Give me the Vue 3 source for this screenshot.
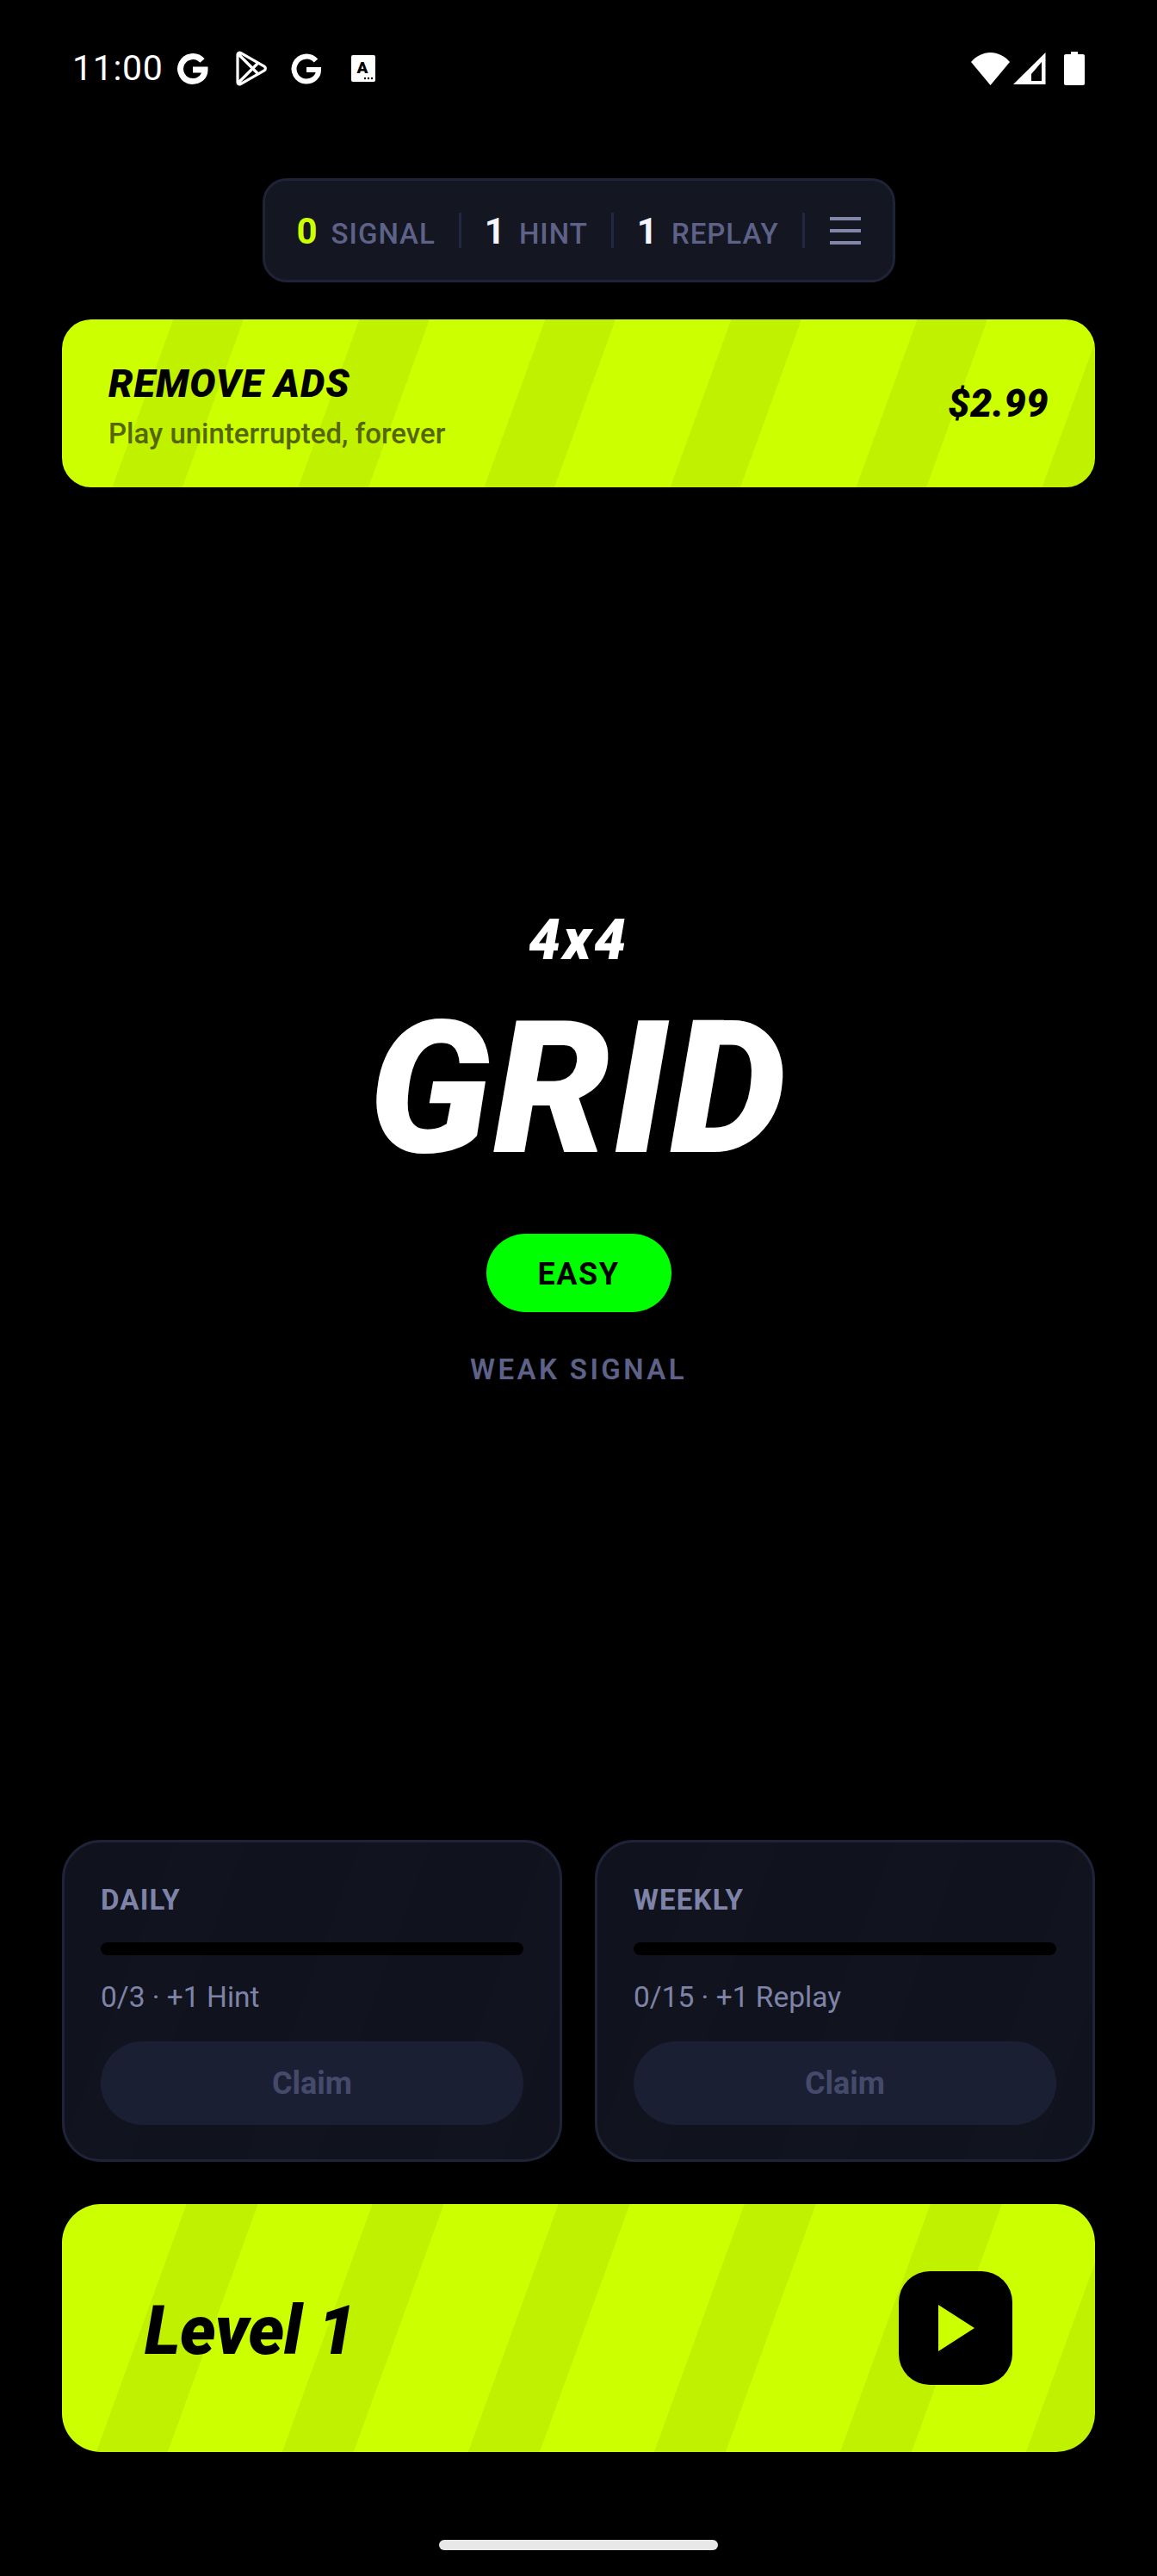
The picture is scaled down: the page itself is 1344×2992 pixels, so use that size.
<script setup>
const stats = [
  { n: '0', label: 'SIGNAL', accent: true },
  { n: '1', label: 'HINT' },
  { n: '1', label: 'REPLAY' }
]
const quests = [
  { title: 'DAILY', progress: '0/3 · +1 Hint' },
  { title: 'WEEKLY', progress: '0/15 · +1 Replay' }
]
</script>

<template>
  <div class="page">
    <header class="status">
      <span class="time">11:00</span>
      <svg class="g g1" viewBox="0 0 38 36"><path d="M31 8.500A14.500 14.500 0 1 0 19 32.500C28 32.500 34 27 34 19H20" fill="none" stroke="#fff" stroke-width="7"/></svg>
      <svg class="play" viewBox="0 0 38 41"><path d="M3 4.500c0-2 2-3 3.500-2.200L34 18.200c1.800 1 1.800 3.600 0 4.600L6.500 38.700C5 39.500 3 38.500 3 36.500ZM3.500 3.500 26 26M3.500 37.500 26 15" fill="none" stroke="#fff" stroke-width="3.200" stroke-linejoin="round"/></svg>
      <svg class="g g2" viewBox="0 0 38 36"><path d="M31 8.500A14.500 14.500 0 1 0 19 32.500C28 32.500 34 27 34 19H20" fill="none" stroke="#fff" stroke-width="6"/></svg>
      <svg class="acard" viewBox="0 0 28 31"><rect width="28" height="31" rx="2" fill="#fff"/><text x="13" y="21" text-anchor="middle" font-family="Roboto" font-weight="900" font-size="19" fill="#000">A</text><circle cx="16" cy="27" r="1.200"/><circle cx="20" cy="27" r="1.200"/><circle cx="24" cy="27" r="1.200"/></svg>
      <span class="spacer"></span>
      <svg class="wifi" viewBox="0 0 45 38"><path d="M22.500 38 0 11C6 4 14 0 22.500 0S39 4 45 11Z" fill="#fff"/></svg>
      <svg class="signal" viewBox="0 0 38 37"><path fill-rule="evenodd" d="M37.500 0V37H0ZM33 11 21 25V33H33Z" fill="#fff"/></svg>
      <svg class="battery" viewBox="0 0 24 39"><path d="M8 0h8v3h6a2 2 0 0 1 2 2v32a2 2 0 0 1-2 2H2a2 2 0 0 1-2-2V5a2 2 0 0 1 2-2h6Z" fill="#fff"/></svg>
    </header>

    <nav class="pill">
      <template v-for="s in stats" :key="s.label">
        <div class="stat">
          <span class="num" :class="{ accent: s.accent }">{{ s.n }}</span>
          <span class="lab">{{ s.label }}</span>
        </div>
        <i class="sep"></i>
      </template>
      <div class="burger"><i></i><i></i><i></i></div>
    </nav>

    <section class="banner">
      <div class="b-text">
        <div class="b-title">REMOVE ADS</div>
        <div class="b-sub">Play uninterrupted, forever</div>
      </div>
      <div class="price">$2.99</div>
    </section>

    <main class="hero">
      <div class="size">4x4</div>
      <h1 class="grid-title">GRID</h1>
      <div class="easy">EASY</div>
      <div class="weak">WEAK SIGNAL</div>
    </main>

    <section class="quests">
      <article v-for="q in quests" :key="q.title" class="quest">
        <div class="q-title">{{ q.title }}</div>
        <div class="track"></div>
        <div class="q-prog">{{ q.progress }}</div>
        <button class="claim">Claim</button>
      </article>
    </section>

    <section class="level">
      <span class="level-name">Level 1</span>
      <span class="go"><svg viewBox="0 0 42 54" class="tri"><path d="M0 0 42 27 0 54Z" fill="#ccff00"/></svg></span>
    </section>

    <div class="home"></div>
  </div>
</template>

<style>
html, body { margin: 0; background: #000; }
</style>

<style scoped>
.page {
  width: 1344px;
  height: 2992px;
  background: #000;
  display: flex;
  flex-direction: column;
  font-family: Roboto, sans-serif;
  color: #fff;
  box-sizing: border-box;
  overflow: hidden;
}
.status {
  height: 41px;
  margin-top: 59px;
  padding: 0 84px 0 84px;
  display: flex;
  align-items: center;
  flex: none;
}
.time { font-size: 41px; font-weight: 400; line-height: 41px; width: 120px; letter-spacing: 0.700px; }
.g { width: 38px; height: 36px; flex: none; }
.play { width: 38px; height: 41px; margin-left: 31px; flex: none; }
.g2 { margin-left: 25px; }
.acard { width: 28px; height: 31px; margin-left: 34px; flex: none; }
.spacer { flex: 1; }
.wifi { width: 45px; height: 38px; flex: none; }
.signal { width: 38px; height: 37px; margin-left: 4px; flex: none; }
.battery { width: 24px; height: 39px; margin-left: 21px; flex: none; }

.pill {
  align-self: center;
  margin-top: 107px;
  width: 735px;
  height: 121px;
  box-sizing: border-box;
  background: #141722;
  border: 3px solid #1f2338;
  border-radius: 28px;
  display: flex;
  align-items: center;
  padding: 3px 0 0 37px;
  flex: none;
}
.stat { display: flex; align-items: baseline; gap: 16px; }
.num { font-size: 42px; font-weight: 700; color: #f4f5ff; line-height: 1; }
.num.accent { color: #ccff00; }
.lab { font-size: 33px; font-weight: 500; letter-spacing: 1px; color: #5e6288; }
.sep { width: 3px; height: 41px; background: #232842; margin: -3px 27px 0 27px; flex: none; }
.burger { display: flex; flex-direction: column; gap: 10px; margin: -3px 0 0 2px; }
.burger i { display: block; width: 36px; height: 4px; background: #8286a8; }

.banner {
  margin: 43px 72px 0;
  height: 195px;
  border-radius: 34px;
  flex: none;
  display: flex;
  align-items: center;
  justify-content: space-between;
  padding: 0 54px;
  color: #000;
  background: repeating-linear-gradient(110deg, #ccff00 0 121.600px, #c0f200 121.600px 198.200px, #ccff00 198.200px 203px);
}
.b-text { padding-top: 6px; }
.b-title { font-size: 45px; font-weight: 900; font-style: italic; line-height: 52px; letter-spacing: 1px; }
.b-sub { font-size: 33px; font-weight: 500; line-height: 40px; margin-top: 12px; color: #556600; }
.price { font-size: 45px; font-weight: 900; font-style: italic; letter-spacing: 0.500px; }

.hero {
  flex: 1;
  display: flex;
  flex-direction: column;
  align-items: center;
  justify-content: flex-start;
  padding-top: 488px;
}
.size { font-size: 66px; font-weight: 900; font-style: italic; line-height: 76px; letter-spacing: 3px; }
.grid-title {
  margin: 27px 0 0;
  font-size: 215px;
  font-weight: 900;
  font-style: italic;
  line-height: 215px;
  letter-spacing: 3px;
}
.easy {
  margin-top: 61px;
  width: 215px;
  height: 91px;
  box-sizing: border-box;
  padding-top: 2px;
  border-radius: 46px;
  background: #00ff00;
  color: #000;
  font-size: 36px;
  font-weight: 700;
  letter-spacing: 1.500px;
  display: flex;
  align-items: center;
  justify-content: center;
}
.weak { margin-top: 47px; font-size: 33px; font-weight: 600; letter-spacing: 3.400px; line-height: 40px; color: #5e6288; }

.quests {
  margin: 0 72px;
  display: grid;
  grid-template-columns: 1fr 1fr;
  gap: 38px;
  flex: none;
}
.quest {
  height: 374px;
  box-sizing: border-box;
  border: 3px solid #1f2338;
  border-radius: 45px;
  padding: 47px 42px 0;
  background: repeating-linear-gradient(110deg, #10131d 0 120px, #11141e 120px 197px, #10131d 197px 203px);
  display: flex;
  flex-direction: column;
}
.q-title { font-size: 33px; font-weight: 700; line-height: 40px; letter-spacing: 1.200px; color: #7f83a8; }
.track { height: 15px; border-radius: 8px; background: #000; margin-top: 29px; }
.q-prog { font-size: 33.500px; font-weight: 400; line-height: 40px; margin-top: 29px; color: #7f83a8; }
.claim {
  margin-top: 31px;
  height: 97px;
  border: 0;
  border-radius: 49px;
  background: #1a1f33;
  color: #454a6b;
  font-family: inherit;
  font-size: 36px;
  font-weight: 700;
}

.level {
  margin: 49px 72px 0;
  height: 288px;
  border-radius: 45px;
  flex: none;
  display: flex;
  align-items: center;
  justify-content: space-between;
  padding: 0 96px;
  color: #000;
  background: repeating-linear-gradient(110deg, #c0f200 0 10.900px, #ccff00 10.900px 135.900px, #c0f200 135.900px 203px);
}
.level-name { font-size: 79px; font-weight: 900; font-style: italic; padding-top: 5px; letter-spacing: -0.500px; }
.go {
  width: 132px;
  height: 132px;
  border-radius: 36px;
  background: #000;
  display: flex;
  align-items: center;
  justify-content: center;
}
.tri { width: 42px; height: 54px; margin-left: 2px; }
.home {
  align-self: center;
  margin: 102px 0 30px;
  width: 324px;
  height: 12px;
  border-radius: 6px;
  background: #e8e8e8;
  flex: none;
}
</style>
